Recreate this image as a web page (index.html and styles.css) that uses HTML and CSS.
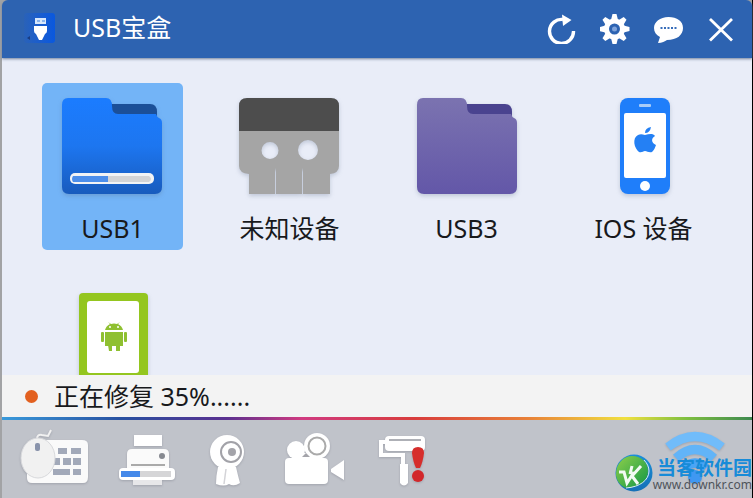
FILE: index.html
```html
<!DOCTYPE html>
<html lang="zh-CN">
<head>
<meta charset="utf-8">
<title>USB宝盒</title>
<link rel="stylesheet" href="styles.css">
</head>
<body>
<div class="window">
  <header class="titlebar">
    <svg class="logo" width="34" height="34" viewBox="0 0 34 34" aria-hidden="true">
      <defs><linearGradient id="lg"><stop offset="0" stop-color="#2a62b8"/><stop offset=".5" stop-color="#1a5dce"/><stop offset="1" stop-color="#0958df"/></linearGradient></defs>
      <rect x="2" y="1" width="31" height="30" rx="3" fill="url(#lg)"/>
      <path d="M5 26l3-2v4z" fill="#1a3c80"/>
      <rect x="13" y="6" width="11" height="6" fill="#d7e7fb"/>
      <path d="M15 8h3v2h-3zm5 0h3v2h-3z" fill="#8bb4ec"/>
      <path d="M12 14h13v5q0 2-2 3l-3 6h-3l-3-6q-2-1-2-3z" fill="#fff"/>
    </svg>
    <h1 class="title">USB宝盒</h1>
    <div class="actions">
      <button class="action" aria-label="刷新"><svg width="30" height="30" viewBox="0 0 30 30">
        <path d="M26.500 17A12 12 0 1 1 16 5.500" fill="none" stroke="#fff" stroke-width="3.400"/><path d="M15 .5l9.500 5.500-8.500 6z" fill="#fff"/></svg></button>
      <button class="action" aria-label="设置"><svg width="30" height="30" viewBox="0 0 30 30">
        <g fill="#fff"><path id="tooth" d="M12.500 0h4l1.500 6h-7z"/><use href="#tooth" transform="rotate(45 14.500 15)"/><use href="#tooth" transform="rotate(90 14.500 15)"/><use href="#tooth" transform="rotate(135 14.500 15)"/><use href="#tooth" transform="rotate(180 14.500 15)"/><use href="#tooth" transform="rotate(225 14.500 15)"/><use href="#tooth" transform="rotate(270 14.500 15)"/><use href="#tooth" transform="rotate(315 14.500 15)"/></g>
        <circle cx="14.500" cy="15" r="8" fill="none" stroke="#fff" stroke-width="5"/><circle cx="14.500" cy="15" r="2.500" fill="#7fa3da"/></svg></button>
      <button class="action" aria-label="消息"><svg width="30" height="30" viewBox="0 0 30 30">
        <path d="M15.500 3C7 3 1 8 1 14c0 4 2 7 6 9l-2 6c4 0 7-2 9-3 10 0 16-5 16-12S24 3 15.500 3z" fill="#fff"/><path d="M7.500 14h16" stroke="#376db9" stroke-width="2" stroke-dasharray="2 1.500"/></svg></button>
      <button class="action" aria-label="关闭"><svg width="30" height="30" viewBox="0 0 30 30">
        <path d="M4 5l22 21.500M26 5L4 26.500" stroke="#fff" stroke-width="2.800"/></svg></button>
    </div>
  </header>

  <main class="devices">
    <button class="tile selected">
      <svg class="icon" width="102" height="102" viewBox="1 0 102 102" aria-hidden="true">
        <defs><linearGradient id="blue" x2="0" y2="1"><stop offset="0" stop-color="#1b7cff"/><stop offset=".5" stop-color="#1d76f0"/><stop offset="1" stop-color="#185bbd"/></linearGradient></defs>
        <path d="M49 6h40q7 0 7 8v10H52z" fill="#1b4f98"/>
        <path d="M7 0h38q6 0 6 8 0 8 6 8h38q1 3 3 4 3 1 3 5v64q0 7-7 7H8q-7 0-7-7V7q0-7 6-7z" fill="url(#blue)"/>
        <rect x="9" y="75" width="84" height="11" rx="5" fill="#f2f3f5"/>
        <path d="M12 78h35v6H12q-2-3 0-6z" fill="#4c8eeb"/><path d="M47 78h41q4 3 0 6H47z" fill="#d4d4d6"/>
      </svg>
      <span>USB1</span>
    </button>
    <button class="tile">
      <svg class="icon" width="102" height="102" viewBox="1 0 102 102" aria-hidden="true">
        <path d="M1 33V8q0-8 8-8h84q8 0 8 8v25z" fill="#4d4d4d"/>
        <path fill-rule="evenodd" d="M1 33h100v35q0 7-9 8v20H65V74l-1-4v26H38V70l-1 4v22H11V76q-10-1-10-8zm31 11a8 8 0 1 0 0 17 8 8 0 0 0 0-17zm38-2a10 10 0 1 0 0 20 10 10 0 0 0 0-20z" fill="#a5a5a5"/>
      </svg>
      <span>未知设备</span>
    </button>
    <button class="tile">
      <svg class="icon" width="102" height="102" viewBox="0 0 102 102" aria-hidden="true">
        <defs><linearGradient id="purple" x2="0" y2="1"><stop offset="0" stop-color="#7b73b0"/><stop offset="1" stop-color="#6357a8"/></linearGradient></defs>
        <path d="M49 6h40q7 0 7 8v10H52z" fill="#4a438f"/>
        <path d="M7 0h38q6 0 6 8 0 8 6 8h38q1 3 3 4 3 1 3 5v64q0 7-7 7H8q-7 0-7-7V7q0-7 6-7z" fill="url(#purple)"/>
      </svg>
      <span>USB3</span>
    </button>
    <button class="tile">
      <svg class="icon" width="102" height="102" viewBox="0 0 102 102" aria-hidden="true">
        <rect x="27" width="50" height="96" rx="8" fill="#1f7efa"/>
        <rect x="31" y="15" width="42" height="65" rx="2" fill="#fff"/>
        <rect x="46" y="6" width="12" height="3" rx="1" fill="#a9cdf8"/>
        <circle cx="52" cy="88" r="5" fill="#fff"/>
        <path d="M52 35q5 0 6-6-6 1-6 6zm0 2c-3-1-5-1-7 0-6 3-4 13 1 17 3 1 4-1 6-1s4 2 7 1c2-2 3-4 4-7-5-2-5-7-1-9-2-3-6-2-10-1z" fill="#2480f4"/>
      </svg>
      <span>IOS 设备</span>
    </button>
    <button class="tile" aria-label="安卓设备">
      <svg class="icon" width="102" height="102" viewBox="0 0 102 102" aria-hidden="true">
        <rect x="17" width="69" height="100" rx="4" fill="#94c61f"/>
        <rect x="25" y="8" width="52" height="72" rx="3" fill="#fff"/>
        <g fill="#8fc031"><path d="M43 37q1-4 5-6l-2-2 3 2q3-1 6 0l3-2-2 2q4 2 5 6z"/><path d="M43 39h18v14H43z"/><path d="M46 52h4v6h-3zm8 0h4v6h-4z"/><rect x="39" y="39" width="3" height="10" rx="1"/><rect x="62" y="39" width="3" height="10" rx="1"/></g><path d="M47 34h2m6 0h2" stroke="#fff" stroke-width="1.500"/>
      </svg>
    </button>
  </main>

  <div class="status" role="status"><i class="dot"></i><span>正在修复 35%......</span></div>

  <footer class="toolbar">
    <button class="tool" aria-label="键盘鼠标"><svg width="71" height="60" viewBox="0 0 71 60">
      <path d="M15 12h48q6 0 6 5v32q0 6-5 6H13q-5 0-5-5V20z" fill="#fafafa"/>
      <path d="M39 20h9v6h-9zm13 0h10v6H52zm-17 10h6v7h-6zm9 0h8v7h-8zm10 0h8v7h-8zM34 41h17v6H34zm20 0h8v6h-8z" fill="#a2a9b9"/>
      <path d="M18 11q0-5 5-4l6 1 3-6" fill="none" stroke="#f1f1f1" stroke-width="2"/>
      <ellipse cx="19" cy="30" rx="17" ry="20" fill="#f1f1f1" stroke="#d8d9dc"/><rect x="16" y="15" width="5" height="8" rx="2" fill="#8993ab"/></svg></button>
    <button class="tool" aria-label="打印机"><svg width="60" height="60" viewBox="0 0 60 60">
      <path d="M16 7h28v11H16z" fill="#fff"/><path d="M14 21h32q5 0 5 5v19H9V26q0-5 5-5z" fill="#fafafa"/><circle cx="44" cy="28" r="3" fill="#878a91"/><path d="M13 37h34" stroke="#aaa" stroke-width="2"/><path d="M15 52h29v5H15z" fill="#e7e7e9"/><rect x="1" y="40" width="56" height="12" rx="4" fill="#fff"/><path d="M3 43h19v6H3z" fill="#4589e9"/><path d="M22 43h31v6H22z" fill="#d5d5d7"/></svg></button>
    <button class="tool" aria-label="摄像头"><svg width="44" height="60" viewBox="0 0 44 60">
      <path d="M12 39h18q2 9 4 16-6 4-11 1-5 3-13 0 0-8 2-17z" fill="#fff"/><path d="M20 41l-2 15" stroke="#d4d4d8" stroke-width="1.500"/><circle cx="21" cy="24" r="17" fill="#fff"/><circle cx="25" cy="24" r="10" fill="none" stroke="#a2a2a8" stroke-width="2"/><circle cx="26" cy="24" r="4" fill="#a4a4aa"/></svg></button>
    <button class="tool" aria-label="摄像机"><svg width="72" height="60" viewBox="0 0 72 60">
      <circle cx="18" cy="22" r="9" fill="#fff"/><circle cx="39" cy="18" r="13" fill="#fff"/><path d="M15 25h27v8H15z" fill="#fff"/><circle cx="39" cy="18" r="8.500" fill="#fff" stroke="#aaa" stroke-width="2"/><path d="M24 29l4-4 4 4z" fill="#a4a4aa"/><rect x="7" y="30" width="43" height="26" rx="4" fill="#fff"/><path d="M53 41l13-9v20l-13-8z" fill="#fff"/></svg></button>
    <button class="tool" aria-label="清理修复"><svg width="48" height="60" viewBox="0 0 48 60">
      <path d="M8 14H3v13h22v13" fill="none" stroke="#fff" stroke-width="4"/><rect x="7" y="8" width="40" height="15" rx="4" fill="#fff"/><path d="M11 12h32" stroke="#aeb0b6" stroke-width="2"/><path d="M22 36h8v19q-4 5-8 0z" fill="#fff"/><path d="M34 25q0-6 6-6t6 6q-1 9-4 15h-4q-3-6-4-15z" fill="#d62e2c"/><circle cx="40" cy="48" r="6" fill="#d2272b"/></svg></button>
    <button class="tool wifi" aria-label="无线"><svg width="62" height="60" viewBox="0 0 62 60">
      <g fill="none" stroke="#62b4f8" stroke-width="9"><path d="M4 19q27-21 54 0" stroke="#71bcfa"/><path d="M12 30q19-17 38 0"/><path d="M20 40q11-10 22 0" stroke="#4aa5f5"/></g><circle cx="31" cy="49" r="7" fill="#3f98f2"/></svg></button>
  </footer>

  <div class="mark">
    <svg width="38" height="38" viewBox="0 0 38 38" aria-hidden="true">
      <defs><linearGradient id="ring" x2="0" y2="1"><stop offset="0" stop-color="#1b8fd8"/><stop offset="1" stop-color="#1570b7"/></linearGradient><linearGradient id="leaf" x2="1" y2="1"><stop offset="0" stop-color="#8fd04a"/><stop offset="1" stop-color="#109646"/></linearGradient></defs>
      <circle cx="19" cy="19" r="18.500" fill="url(#ring)"/>
      <path d="M1 20C1 9 9 2 17 2c10 0 16 7 16 15 0 10-8 16-22 17C5 32 1 26 1 20z" fill="url(#leaf)"/>
      <path d="M4 18h5l3 11 7-11M17 12l-2 8m11-8l-9 10 6 8" fill="none" stroke="#f2faf4" stroke-width="3"/>
      <path d="M11 34c14-1 23-8 23-17 0-4-2-8-5-11" fill="none" stroke="#d9edf6"/>
    </svg>
    <div class="mark-text"><strong>当客软件园</strong><span>www.downkr.com</span></div>
  </div>
</div>
</body>
</html>
```
FILE: styles.css
```css
* {
  box-sizing: border-box;
}

body {
  margin: 0;
  background: #a2a3a5;
  color: #18191c;
  font-family: "Noto Sans", "Noto Sans CJK SC", sans-serif;
  font-size: 25px;
  line-height: 34px;
}

button {
  padding: 0;
  border: 0;
  background: none;
  color: inherit;
  font: inherit;
  cursor: pointer;
}

svg {
  display: block;
}

.window {
  position: relative;
  display: flex;
  flex-direction: column;
  height: 100vh;
  padding-left: 2px;
  border-right: 1px solid #000;
}

.titlebar {
  position: relative;
  display: flex;
  flex: none;
  align-items: center;
  height: 58px;
  padding: 0 16px 0 20px;
  border-radius: 6px 6px 0 0;
  background: #2d63b1;
  box-shadow: 0 1px 3px #71809b;
  color: #fff;
}

.title {
  margin: 0 auto 0 17px;
  padding-bottom: 4px;
  font-size: 25px;
  font-weight: 400;
}

.actions {
  display: flex;
  gap: 23px;
}

.devices {
  display: grid;
  flex: 1;
  grid-template-columns: repeat(4, 1fr);
  grid-auto-rows: 167px;
  gap: 28px 36px;
  min-height: 0;
  padding: 25px 38px 0 40px;
  overflow: hidden;
  background: #e9edf8;
}

.tile {
  display: flex;
  flex-direction: column;
  align-items: center;
  gap: 11px;
  padding-top: 15px;
  border-radius: 5px;
}

.selected {
  background: #73b4f7;
}

.icon {
  filter: drop-shadow(0 2px 2px #50608044);
}

.status {
  display: flex;
  flex: none;
  align-items: center;
  gap: 16px;
  height: 42px;
  padding-left: 23px;
  background: #f3f3f3;
}

.dot {
  width: 13px;
  height: 13px;
  border-radius: 50%;
  background: #e2601f;
}

.toolbar {
  display: flex;
  flex: none;
  align-items: flex-start;
  gap: 28px;
  height: 81px;
  padding: 8px 26px 0 17px;
  border-top: 3px solid;
  border-image: linear-gradient(90deg, #3a9bdc, #2850a0 16%, #5a3090 30%, #d03a80 40%, #d83c3c 55%, #e88038 70%, #f0e040 83%, #80c040 91%, #3c8850) 1;
  background: #c0c3ca;
}

.tool svg {
  filter: drop-shadow(0 1px 1px #70748066);
}

.wifi {
  margin-left: auto;
}

.mark {
  position: absolute;
  right: 0;
  bottom: 6px;
  display: flex;
  align-items: flex-end;
}

.mark-text {
  display: flex;
  flex-direction: column;
  font-size: 12px;
  line-height: 15px;
  text-align: right;
  color: #4f545b;
}

.mark-text strong {
  color: #178bd8;
  font-size: 19px;
  font-weight: 700;
  line-height: 18px;
}
```
